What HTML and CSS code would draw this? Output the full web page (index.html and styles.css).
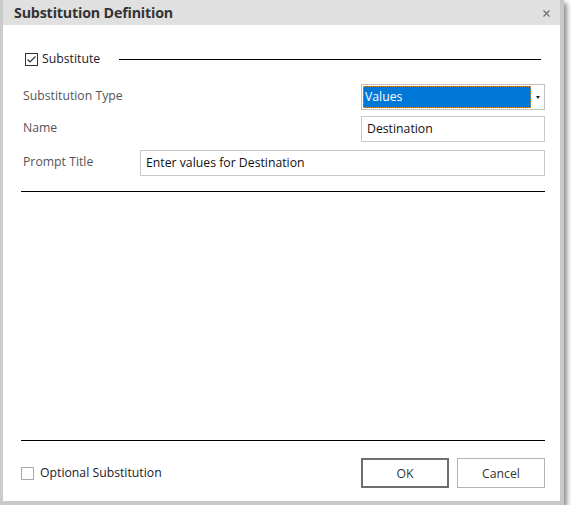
FILE: index.html
```html
<!DOCTYPE html>
<html>
<head>
<meta charset="utf-8">
<link rel="stylesheet" href="styles.css">
</head>
<body>
<div class="window">
  <div class="titlebar">
    <span class="title">Substitution Definition</span>
    <svg class="close" width="7" height="7" viewBox="0 0 7 7"><path d="M0.5 0.5L6.5 6.5M6.5 0.5L0.5 6.5" stroke="#6a6a6a" stroke-width="1.1"/></svg>
  </div>
  <div class="content">
    <div class="group-head">
      <span class="check checked"><svg width="11" height="11" viewBox="0 0 11 11"><path d="M1.5 5.5L4 8L9.5 2.5" fill="none" stroke="#333" stroke-width="1.2"/></svg></span>
      <span class="group-label">Substitute</span>
      <span class="rule"></span>
    </div>
    <div class="row row-first">
      <span class="label">Substitution Type</span>
      <div class="select">
        <div class="select-value">Values</div>
        <div class="select-arrow"><span class="tri"></span></div>
      </div>
    </div>
    <div class="row row-name">
      <span class="label">Name</span>
      <div class="input short">Destination</div>
    </div>
    <div class="row row-prompt">
      <span class="label label-fixed">Prompt Title</span>
      <div class="input wide">Enter values for Destination</div>
    </div>
    <div class="hr hr-top"></div>
    <div class="spacer"></div>
    <div class="hr"></div>
    <div class="footer">
      <div class="opt">
        <span class="check"></span>
        <span class="opt-label">Optional Substitution</span>
      </div>
      <div class="buttons">
        <div class="btn btn-default">OK</div>
        <div class="btn">Cancel</div>
      </div>
    </div>
  </div>
</div>
</body>
</html>
```

FILE: styles.css
```css
html, body {
  margin: 0;
  padding: 0;
  background: #ffffff;
}
body {
  font-family: "Open Sans", "Noto Sans", sans-serif;
  font-size: 12px;
}
.window {
  width: 557px;
  height: 501px;
  border-left: 3px solid #cbcbcb;
  border-right: 4px solid #c9c9c9;
  border-bottom: 4px solid #c9c9c9;
  background: #fff;
  box-shadow: 3px 3px 5px rgba(0, 0, 0, 0.45);
  display: flex;
  flex-direction: column;
}
.titlebar {
  height: 25px;
  background: #e0e0e0;
  display: flex;
  align-items: center;
  justify-content: space-between;
  padding: 0 10px 0 11px;
  flex: none;
}
.title {
  font-weight: bold;
  font-size: 14.3px;
  color: #333;
  letter-spacing: -0.2px;
}
.close {
  margin-top: 2px;
}
.content {
  flex: 1;
  display: flex;
  flex-direction: column;
  padding: 27px 15px 0 18px;
}
.group-head {
  display: flex;
  align-items: center;
  height: 14px;
  padding-left: 4px;
}
.check {
  width: 11px;
  height: 11px;
  border: 1px solid #999;
  background: #fff;
  display: inline-block;
  flex: none;
  position: relative;
}
.check.checked {
  border-color: #333;
}
.check svg {
  display: block;
}
.group-label {
  margin-left: 4px;
  color: #1a1a2a;
  font-size: 12.25px;
  margin-top: -1px;
}
.rule {
  flex: 1;
  height: 1px;
  background: #000;
  margin-left: 19px;
  margin-right: 4px;
}
.row {
  display: flex;
  align-items: center;
  height: 26px;
}
.row-first { margin-top: 18px; }
.row-name { margin-top: 6px; }
.row-prompt { margin-top: 8px; }
.label {
  flex: 1;
  color: #555;
  padding-left: 2px;
  font-size: 12.25px;
  margin-top: -3px;
}
.label-fixed {
  flex: none;
  width: 117px;
}
.select {
  width: 182px;
  height: 24px;
  border: 1px solid #c2c2c2;
  display: flex;
  padding: 0;
}
.select-value {
  flex: 1;
  margin: 1px 0 1px 1px;
  background: #0078d7;
  color: #fff;
  outline: 1px dotted #e08a2a;
  outline-offset: -1px;
  border: 1px dotted #222;
  padding-left: 1px;
  line-height: 20px;
  font-size: 12.25px;
}
.select-arrow {
  width: 13px;
  display: flex;
  align-items: center;
  justify-content: center;
}
.tri {
  width: 0;
  height: 0;
  border-left: 2.5px solid transparent;
  border-right: 2.5px solid transparent;
  border-top: 3px solid #222;
}
.input {
  height: 24px;
  border: 1px solid #c8c8c8;
  line-height: 24px;
  padding-left: 5px;
  color: #111;
  font-size: 12.25px;
  box-sizing: content-box;
}
.input.short {
  width: 177px;
}
.input.wide {
  flex: 1;
}
.hr {
  height: 1px;
  background: #000;
  flex: none;
}
.hr-top {
  margin-top: 15px;
}
.spacer {
  flex: 1;
}
.footer {
  display: flex;
  align-items: center;
  justify-content: space-between;
  margin-top: 17px;
  margin-bottom: 13px;
}
.opt {
  display: flex;
  align-items: center;
}
.opt .check {
  border-color: #a8a8a8;
}
.opt-label {
  margin-left: 6px;
  color: #1a1a2a;
  font-size: 12.25px;
  margin-top: -1px;
}
.buttons {
  display: flex;
  gap: 8px;
}
.btn {
  width: 86px;
  height: 28px;
  border: 1px solid #b4b4b4;
  display: flex;
  align-items: center;
  justify-content: center;
  color: #333;
  font-size: 12.25px;
  background: #fff;
}
.btn-default {
  width: 84px;
  height: 26px;
  border: 2px solid #6e6e6e;
}
```
